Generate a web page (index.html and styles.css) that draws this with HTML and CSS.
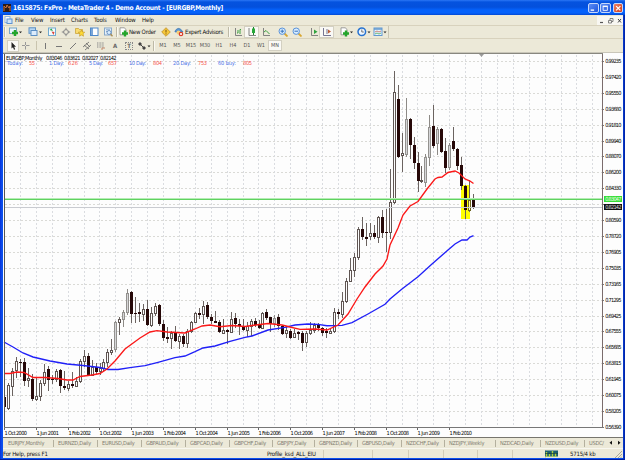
FILE: index.html
```html
<!DOCTYPE html>
<html lang="en">
<head>
<meta charset="utf-8">
<title>MetaTrader 4</title>
<link rel="stylesheet" href="styles.css">
</head>
<body>
<div class="window">
  <header class="titlebar">
    <svg class="appicon" viewBox="0 0 8 8"><rect width="8" height="8" fill="#2b1a18"/><path d="M1 7V2l2 2 1-3 2 3 1-2v5" fill="none" stroke="#c8703c" stroke-width="1"/></svg>
    <span class="title">1615875: FxPro - MetaTrader 4 - Demo Account - [EURGBP,Monthly]</span>
    <span class="winbtn"><svg viewBox="0 0 10 10"><path d="M2 7.2h4" stroke="#fff" stroke-width="1.6"/></svg></span>
    <span class="winbtn"><svg viewBox="0 0 10 10"><path d="M2.5 3v4.5h5V3z" fill="none" stroke="#fff"/><path d="M2 2.6h6" stroke="#fff" stroke-width="1.4"/></svg></span>
    <span class="winbtn close"><svg viewBox="0 0 10 10"><path d="M2.5 2.5l5 5m0-5l-5 5" stroke="#fff" stroke-width="1.5"/></svg></span>
  </header>
  <nav class="menubar">
    <svg class="docicon" viewBox="0 0 9 9"><rect x="1" y=".5" width="5" height="6" fill="#fff" stroke="#8fb5e2"/><rect x="3" y="3" width="5" height="4.5" fill="#cfe4fb" stroke="#5d92d2"/></svg>
    <span>File</span><span>View</span><span>Insert</span><span>Charts</span><span>Tools</span><span>Window</span><span>Help</span>
    <svg class="mdi" viewBox="0 0 26 9"><path d="M0 0h26v9H0z" fill="#f8f7f2"/><path d="M3 6.5h3" stroke="#555" stroke-width="1.2"/><path d="M11.5 4.5h3v2.5h-3zM13 4V2.500h3V5.500h-1" fill="none" stroke="#666" stroke-width=".8"/><path d="M21 3l3 3.500m0-3.500l-3 3.500" stroke="#444"/></svg>
  </nav>
  <div class="toolbar main">
    <i class="grip"></i>
    <div class="cell"><svg viewBox="0 0 14 10"><rect x=".5" y="1" width="7" height="5.500" fill="#edf6ff" stroke="#77a5c8"/><path d="M6 3v6M3 6h6" stroke="#24a52b" stroke-width="2.500"/><path d="M10 4.500h3l-1.500 1.700z" fill="#222"/></svg></div>
    <div class="cell"><svg viewBox="0 0 14 10"><rect x="1" y=".8" width="6.500" height="5.500" fill="#b8d7f4" stroke="#5b8fc4"/><rect x="3" y="3.500" width="6" height="5" fill="#dcecfc" stroke="#5b8fc4"/><path d="M11 4.500h3l-1.500 1.700z" fill="#222"/></svg></div>
    <div class="cell"><svg viewBox="0 0 10 10"><rect x="1.500" y="1" width="7" height="7.500" fill="#f4fbff" stroke="#70a9cf"/><path d="M2.500 3l2-1.500L6 4z" fill="#27a547"/><path d="M4.500 4.500l3 .5-1 3z" fill="#dd4438"/></svg></div>
    <div class="cell"><svg viewBox="0 0 10 10"><circle cx="5" cy="5" r="2.400" fill="none" stroke="#888"/><path d="M5 .8v2.400m0 3.600v2.400M.8 5h2.400m3.600 0h2.400" stroke="#888"/></svg></div>
    <div class="cell"><svg viewBox="0 0 10 10"><path d="M.5 1.500h3l1 1h3v4h-7z" fill="#f9dc70" stroke="#c79d2d" stroke-width=".7"/><path d="M6.500 3l1 2 2.200.2-1.600 1.600.4 2.400-2-1.200-2 1.200.4-2.400-1.600-1.600 2.200-.2z" fill="#ffdb39" stroke="#bd9420" stroke-width=".6"/></svg></div>
    <div class="cell"><svg viewBox="0 0 10 10"><rect x="1.500" y="1" width="7.500" height="7.500" fill="#fff" stroke="#4e89cb"/><path d="M3 1v7.500" stroke="#4e89cb" stroke-width="1.500"/></svg></div>
    <div class="cell"><svg viewBox="0 0 10 10"><rect x="1.500" y="1" width="7" height="7" fill="#e7f0f8" stroke="#86a8cb"/><path d="M3 2.800h4M3 4.500h2" stroke="#86a8cb"/><circle cx="6" cy="5.500" r="2" fill="#d8edff" stroke="#7096c5"/><path d="M7.500 7l2 2.300" stroke="#aa8d54" stroke-width="1.300"/></svg></div>
    <i class="grip"></i>
    <div class="cell"><svg viewBox="0 0 10 10"><path d="M1 .8h4.500l1.500 2v5H1z" fill="#fff" stroke="#888" stroke-width=".8"/><path d="M6 3.500v6M3 6.500h6" stroke="#24a52b" stroke-width="2.400"/></svg></div>
    <span class="label order">New Order</span>
    <div class="cell"><svg viewBox="0 0 10 10"><path d="M5 .7L9.300 5 5 9.300.7 5z" fill="#f6c73a" stroke="#b9861b" stroke-width=".7"/><path d="M5 2.800v2.700M5 6.400v1" stroke="#7b5412"/></svg></div>
    <div class="cell"><svg viewBox="0 0 10 10"><path d="M1 4Q4-1 8 3.500L9 5H1z" fill="#5c98d2" stroke="#356ba8" stroke-width=".6"/><circle cx="4.500" cy="5.500" r="2" fill="#f5ce79"/><circle cx="7" cy="7" r="2.300" fill="#dc3d28"/><rect x="6" y="6.200" width="2" height="1.600" fill="#fff"/></svg></div>
    <span class="label advisors">Expert Advisors</span>
    <i class="grip"></i>
    <div class="cell"><svg viewBox="0 0 10 10"><path d="M2.500 1v7.500H9" fill="none" stroke="#777" stroke-width=".9"/><path d="M4 6h1V3M7 7V2.500h1" fill="none" stroke="#3c9f40"/></svg></div>
    <div class="cell on"><svg viewBox="0 0 10 10"><path d="M2 1v7.500h7" fill="none" stroke="#777" stroke-width=".9"/><path d="M6.500 0v8" stroke="#19832b"/><rect x="5" y="1.500" width="3" height="4.500" fill="#27a739"/></svg></div>
    <div class="cell"><svg viewBox="0 0 10 10"><path d="M2.500 1v7.500H9" fill="none" stroke="#777" stroke-width=".9"/><path d="M3 5l2-1.500L8.500 7" fill="none" stroke="#3c9f40"/></svg></div>
    <i></i>
    <div class="cell"><svg viewBox="0 0 10 10"><path d="M6.500 6.500l3 3" stroke="#d9a832" stroke-width="1.800"/><circle cx="4.200" cy="4.200" r="3.200" fill="#d9edff" stroke="#5992d9"/><path d="M2.500 4.200H6M4.200 2.500V6" stroke="#3571bd"/></svg></div>
    <div class="cell"><svg viewBox="0 0 10 10"><path d="M6.500 6.500l3 3" stroke="#d9a832" stroke-width="1.800"/><circle cx="4.200" cy="4.200" r="3.200" fill="#d9edff" stroke="#5992d9"/><path d="M2.500 4.200H6" stroke="#3571bd"/></svg></div>
    <i></i>
    <div class="cell"><svg viewBox="0 0 10 10"><path d="M2.500 1v7.500H9" fill="none" stroke="#777" stroke-width=".9"/><path d="M5 2.500l3.500 2.200L5 7z" fill="#2da23d"/></svg></div>
    <div class="cell on"><svg viewBox="0 0 10 10"><path d="M1.500 1v7.500H9M5 2v5" fill="none" stroke="#668" stroke-width=".9"/><path d="M6 2.500l3 2-3 2z" fill="#bc5b35"/></svg></div>
    <i></i>
    <div class="cell"><svg viewBox="0 0 14 10"><path d="M1 .8h4.500l1.500 2v5H1z" fill="#fff" stroke="#888" stroke-width=".8"/><path d="M6 3.500v6M3 6.500h6" stroke="#24a52b" stroke-width="2.400"/><path d="M10 4.500h3l-1.500 1.700z" fill="#222"/></svg></div>
    <div class="cell"><svg viewBox="0 0 14 10"><circle cx="4.800" cy="4.800" r="3.800" fill="#eff7ff" stroke="#2773d0" stroke-width="1.500"/><path d="M4.800 2.500v2.500h2" fill="none" stroke="#555" stroke-width=".8"/><path d="M10.500 4.500h3L12 6.200z" fill="#222"/></svg></div>
    <div class="cell"><svg viewBox="0 0 14 10"><rect x="1" y="1" width="8" height="7.500" fill="#e7f4ff" stroke="#6098cf"/><path d="M1 2h8" stroke="#6098cf" stroke-width="1.500"/><path d="M2 5l2-1 2 1 2-1" fill="none" stroke="#c06554" stroke-width=".8"/><path d="M2 7l2-1 2 1 2-1" fill="none" stroke="#45a454" stroke-width=".8"/><path d="M10.500 4.500h3L12 6.200z" fill="#222"/></svg></div>
    <i class="endline"></i>
  </div>
  <div class="toolbar tools">
    <i class="grip"></i>
    <div class="cell on"><svg viewBox="0 0 10 10"><path d="M3.500 1v6.500L5 6.200l1 2.600 1.200-.5-1.100-2.500H8z" fill="#222"/></svg></div>
    <div class="cell"><svg viewBox="0 0 10 10"><path d="M4.500 1v3m0 1v3.500M1 4.500h3m1 0h3.500" stroke="#999"/></svg></div>
    <i class="sep"></i>
    <div class="cell"><svg viewBox="0 0 10 10"><path d="M5.500 2v6" stroke="#777"/></svg></div>
    <div class="cell"><svg viewBox="0 0 10 10"><path d="M2 5.500h6" stroke="#777"/></svg></div>
    <div class="cell"><svg viewBox="0 0 10 10"><path d="M2 8l6-6" stroke="#777"/></svg></div>
    <div class="cell"><svg viewBox="0 0 10 10"><path d="M1 6l6-5M3 9l6-5M2 4l5 4M4 2l4 4" stroke="#666" stroke-width=".8"/></svg></div>
    <div class="cell"><svg viewBox="0 0 10 10"><path d="M1 2h7M1 4h7M1 6h7" stroke="#888" stroke-dasharray="1 .6"/><path d="M6 9V7h3" fill="none" stroke="#c48a6c"/></svg></div>
    <div class="cell"><b>A</b></div>
    <div class="cell"><b class="boxed">T</b></div>
    <div class="cell"><svg viewBox="0 0 14 10"><path d="M1 3l2-2 2 2-2 2zM5 7l2-2 2 2-2 2z" fill="#444"/><path d="M4 4l2 2" stroke="#444"/><path d="M10.500 4.500h3L12 6.200z" fill="#222"/></svg></div>
    <i class="grip"></i>
    <span class="tf">M1</span><span class="tf">M5</span><span class="tf">M15</span><span class="tf">M30</span><span class="tf">H1</span><span class="tf">H4</span><span class="tf">D1</span><span class="tf">W1</span><span class="tf on">MN</span>
  </div>
  <svg class="chart" id="chart" viewBox="3 52 620 385"></svg>
  <div class="tabs">
    <span>EURJPY,Monthly</span><span>EURNZD,Daily</span><span>EURUSD,Daily</span><span>GBPAUD,Daily</span><span>GBPCAD,Daily</span><span>GBPCHF,Daily</span><span>GBPJPY,Daily</span><span>GBPNZD,Daily</span><span>GBPUSD,Daily</span><span>NZDCHF,Daily</span><span>NZDJPY,Weekly</span><span>NZDCAD,Daily</span><span>NZDUSD,Daily</span><span>USDC/</span>
    <svg class="arrows" viewBox="0 0 16 10"><path d="M5 2.800v4L2.500 4.800zM11 2.800v4l2.500-2z" fill="#111"/></svg>
  </div>
  <footer class="status">
    <span>For Help, press F1</span><span>Profile_ksd_ALL_EIU</span><i></i><i></i><i></i><i></i><i></i><i></i><i></i>
    <svg class="bars" viewBox="0 0 13 8"><path d="M0 .5h13v6H0z" fill="#1b5f70"/><path d="M1.500 7V2m3 5V4m3 3V1m3 6V3" stroke="#b4d03e" stroke-width="1.400"/><path d="M0 3.500h13" stroke="#183d38" stroke-width=".7"/></svg>
    <span class="traffic">5715/4 kb</span>
    <svg class="resize" viewBox="0 0 8 8"><path d="M1 8l7-7M4 8l4-4M6.500 8L8 6.500" stroke="#aaa797"/></svg>
  </footer>
</div>
<script src="chart.js"></script>
</body>
</html>
```

FILE: styles.css
```css
* { box-sizing: border-box; }
body {
  margin: 0;
  font: 6px/1 "DejaVu Sans Condensed", "DejaVu Sans", sans-serif;
  color: #111;
}
.window {
  width: 625px;
  height: 460px;
  padding: 0 2px 2px 3px;
  background: linear-gradient(90deg, #0831d9 0, #0b50ee 2px, #0b50ee 3px, #0b50ee 622px, #001ea0 625px);
  border-bottom: 1px solid #001ea0;
  overflow: hidden;
  white-space: nowrap;
}
.window > * { width: 620px; }
svg { display: block; }

.titlebar {
  display: flex;
  align-items: center;
  height: 15px;
  gap: 1px;
  padding: 1px 2px 0 3px;
  margin-left: -3px;
  background: linear-gradient(#2b76f5 0, #0553df 2px, #0450dc 7px, #0562fb 10px, #0562fb 13px, #0348d2 15px);
}
.window > .titlebar { width: 625px; }
.appicon { width: 8px; height: 8px; }
.title {
  flex: 1;
  margin-left: 1px;
  color: #fff;
  font: bold 6.600px/10px "DejaVu Sans Condensed", sans-serif;
  letter-spacing: -0.25px;
}
.winbtn {
  width: 10.500px;
  height: 10.500px;
  margin-left: .7px;
  border: 1px solid #c6d8fb;
  border-radius: 2px;
  background: linear-gradient(135deg, #5b8df5, #1e55dd);
}
.winbtn.close { background: linear-gradient(135deg, #ee8366, #d33c17); }

.menubar {
  display: grid;
  grid-template-columns: 12px 16px 19px 21px 23px 21px 27px 20px 1fr;
  align-items: center;
  height: 11px;
  background: #ece9d8;
  border-bottom: 1px solid #d8d2bd;
  letter-spacing: -.1px;
}
.docicon { width: 9px; height: 9px; margin-left: 1px; }
.mdi { width: 26px; height: 9px; justify-self: end; }

.toolbar {
  display: grid;
  align-items: center;
  background: #ece9d8;
}
.main {
  height: 13px;
  grid-template-columns: 4px 17px 21px 14px 14px 14px 14px 14px 4px 10px 30px 14px 12px 42px 4px 13px 15px 14px 3px 14px 14px 4px 11px 15px 4px 17px 17px 16px 2px;
  border-bottom: 1px solid #d8d2bd;
}
.tools {
  height: 13px;
  grid-template-columns: 4px 12px 14px 5px 14px 14px 14px 14px 14px 14px 14px 16px 4px repeat(9, 14px);
}
.tools .grip:first-child { visibility: hidden; }
.cell {
  display: flex;
  align-items: center;
  justify-content: center;
  height: 12px;
}
.cell svg { height: 10px; width: 10px; }
.cell svg[viewBox="0 0 14 10"] { width: 14px; }
.cell b { color: #666; font-size: 6px; }
.cell .boxed { border: 1px dotted #888; padding: 0 1px; }
.on { background: #faf9f5; border: 1px solid #d3d0c2; }
.grip { width: 1px; height: 10px; margin-left: 1px; background: #bdb9a6; box-shadow: 1px 0 #faf9f2; }
.sep { width: 1px; height: 9px; margin-left: 3px; background: #c9c4ae; }
.endline { width: 1px; height: 12px; background: #cac6b4; }
.label { font-size: 6px; letter-spacing: -.22px; }
.advisors { letter-spacing: -.28px; }
.tf {
  height: 11px;
  line-height: 11px;
  text-align: center;
  color: #555;
  font-size: 5.500px;
}
.tf.on { line-height: 9px; }

.chart { height: 385px; }
.chart text { font: 5.600px "DejaVu Sans Condensed", sans-serif; fill: #000; }

.tabs {
  display: grid;
  grid-template-columns: 50px 44px 44px 44px 44px 43px 42px 43px 44px 43px 51px 45px 44px 22px 16px;
  align-items: center;
  height: 11px;
  padding-left: 1px;
  background: #ece9d8;
  border-top: 1px solid #77756d;
  color: #7f7c70;
  font-size: 5.600px;
  overflow: hidden;
}
.tabs span {
  height: 7px;
  line-height: 7px;
  padding-left: 4px;
  border-right: 1px solid #b4b09e;
  letter-spacing: -.24px;
}
.tabs span:nth-last-of-type(1) { border: 0; }
.arrows { width: 16px; height: 10px; }

.status {
  display: grid;
  grid-template-columns: 264px 56px 49px 36px 35px 34px 35px 33px 0 13px 56px 9px;
  align-items: center;
  height: 10px;
  background: #ece9d8;
  border-top: 1px solid #f8f7ef;
}
.status > span:first-child { letter-spacing: -.22px; }
.status i { height: 8px; border-left: 1px solid #d2ccb8; }
.status span:nth-of-type(2) { letter-spacing: -.22px; }
.bars { width: 13px; height: 8px; }
.traffic { padding-left: 12px; letter-spacing: -.2px; }
.resize { width: 8px; height: 8px; }
```

FILE: chart.js
```js
const chart = document.getElementById('chart');
const NS = 'http://www.w3.org/2000/svg';

function add(tag, attrs, text) {
  const el = document.createElementNS(NS, tag);
  for (const key in attrs) el.setAttribute(key, attrs[key]);
  if (text) el.textContent = text;
  chart.appendChild(el);
}
function rect(x, y, width, height, fill) {
  add('rect', { x, y, width, height, fill });
}

rect(3, 52, 620, 385, '#fdfdfd');
rect(3, 52, 620, 1, '#c9c6b9');
rect(3, 53, 600, 1, '#88877f');

// Grid
for (let k = 0; k < 24; k++) {
  const y = Math.round(61 + k * 15.91) + 0.5;
  add('path', { d: `M5 ${y}H602`, stroke: '#dadad6', 'stroke-dasharray': '2 2', fill: 'none' });
}
for (let k = 1; k < 38; k++) {
  const x = Math.floor(4.5 + k * 15.9) + 0.5;
  if (x < 602) add('path', { d: `M${x} 55V427`, stroke: '#dadce0', 'stroke-dasharray': '2 2', fill: 'none' });
}

rect(461, 185, 9, 34, '#ffff00');

// Each candle: high, body top, body bottom, low, kind (0 hollow, 1 filled, 2 shaded, 3 highlighted)
const candles = [
[393,397,407,419,1],[383,385,408,410,0],[368,371,386,396,0],[357,361,370,378,0],[359,362,363,377,1],[358,362,381,386,1],
[368,378,380,387,0],[374,379,399,401,1],[377,396,399,401,0],[380,383,396,401,0],[364,372,383,386,0],[366,369,380,391,1],
[375,379,380,384,1],[369,371,379,382,0],[369,370,386,393,1],[371,386,388,390,1],[381,384,388,391,0],[372,384,386,388,1],
[377,381,386,387,0],[359,361,381,383,0],[350,356,361,367,0],[353,356,375,376,1],[360,367,375,376,0],[363,367,372,374,1],
[363,368,371,375,0],[359,362,368,371,0],[349,352,362,367,0],[339,350,352,355,0],[321,322,349,352,2],[317,319,322,335,0],
[310,312,319,327,2],[289,293,312,315,2],[291,292,314,323,1],[297,313,314,323,1],[303,312,314,322,1],[304,309,314,321,0],
[300,309,325,326,1],[307,313,325,327,0],[303,306,313,316,0],[304,305,324,326,1],[320,324,338,341,1],[327,337,339,343,1],
[331,333,338,349,0],[326,333,341,342,1],[334,336,341,349,0],[334,336,344,347,1],[329,331,343,348,0],[321,322,331,333,0],
[312,313,322,323,0],[308,313,315,319,1],[301,306,314,324,0],[302,305,317,319,1],[314,317,321,324,1],[311,321,323,323,1],
[320,322,332,333,1],[319,330,333,333,0],[329,330,332,344,1],[312,319,332,333,0],[313,318,324,328,1],[319,324,326,335,1],
[319,326,330,331,1],[322,326,330,337,0],[319,321,326,336,0],[318,321,325,327,1],[320,325,328,329,1],[312,313,328,329,0],
[309,312,318,320,1],[317,317,324,332,1],[315,318,323,327,2],[314,317,326,330,1],[325,326,334,335,1],[326,330,333,338,0],
[329,331,338,339,1],[329,333,337,338,0],[331,332,334,340,1],[331,333,343,351,1],[331,333,342,347,0],[322,330,333,335,0],
[323,325,330,333,0],[323,325,328,331,1],[327,328,333,336,1],[328,331,333,338,1],[329,331,333,334,0],[308,312,331,333,0],
[309,312,314,319,1],[292,301,314,318,0],[278,281,301,303,0],[258,270,281,282,0],[253,257,270,277,0],[227,229,257,260,0],
[217,229,237,240,1],[223,237,239,246,1],[223,233,236,240,0],[225,233,237,239,1],[216,217,237,243,0],[210,217,233,238,1],
[209,232,233,252,1],[169,202,232,239,0],[71,92,202,204,0],[85,99,157,158,1],[133,153,155,172,0],[98,119,154,157,2],
[118,119,145,159,1],[137,145,163,169,1],[152,163,181,192,1],[166,180,181,183,0],[154,157,182,187,2],[115,127,157,166,2],
[105,126,146,148,1],[127,129,143,155,2],[128,129,152,153,1],[138,151,168,173,1],[143,145,167,170,2],[127,141,149,151,1],
[148,149,166,170,1],[157,165,186,190,1],[185,186,210,219,1],[180,200,210,212,3],[194,199,208,209,1]
];
const outline = ['#5f5552', '#260808', '#93918e', '#6b6320'];
const inner = ['#fdfdfd', '#260808', '#d6d6d8', '#ffffb0'];
candles.forEach(([high, top, bottom, low, kind], i) => {
  const x = Math.floor(4.6 + i * 3.975);
  const left = Math.max(4, x - 1);
  const height = Math.max(1, bottom - top);
  rect(x, high, 1, low - high, kind === 2 ? '#8d8a86' : '#6b6360');
  rect(left, top, x + 2 - left, kind === 1 ? height : height + 1, outline[kind]);
  if (kind !== 1 && height > 1) rect(x, top + 1, 1, height - 1, inner[kind]);
});

// Price levels
rect(5, 199, 598, 1, '#5fd35f');
rect(5, 198, 598, 1, '#b5ebb5');
rect(5, 207, 598, 1, '#c9cbd0');

// Moving averages
const red = '4,373.5 10,373.500 17,372 24,372.5 33,377.5 45,377.5 58,378.500 67,380 73,380 80,376.5 92,375 100,373.5 107,369 115,361 125,349 140,338 150,332 157,330.7 167,332 185,333 195,329 202,326 210,325 220,326.7 232,325.5 245,326.5 252,325.5 268,323.5 282,325 290,327 300,329.3 315,329 327,330 338,325 348,314 357,299 365,287 375,274 383,266 387,259 390,245 398,228 403,215 410,206 418,201.5 427,189 435,179 438,177.5 442,177 448,172.5 455,171 459,173 465,179 470,181 473.5,183.5';
const blue = '4,342 13,347 23,353 33,357 50,361 67,364 83,365.5 100,367.5 108,369.5 118,369.5 130,367.7 145,365.7 158,362.3 175,357.7 185,356 195,351.7 203,348 215,346 230,341.3 245,337.3 252,336 268,330 285,327.3 295,325 308,324 318,324.3 327,325.7 342,325.3 352,322.7 368,314 385,304.3 390,299 402,289 418,276.7 432,264 448,250 455,244 462,240 467,240 470,237 473.5,235.7';
add('polyline', { points: blue, fill: 'none', stroke: '#2020f8', 'stroke-width': 1.35 });
add('polyline', { points: red, fill: 'none', stroke: '#fb1818', 'stroke-width': 1.35 });

// Axes
rect(4, 54, 1, 374, '#555');
rect(602, 54, 1, 374, '#7a6c6c');
rect(4, 427, 599, 1, '#777');
add('path', { d: 'M479 54h5l-2.5 3z', fill: '#999' });

// The gridline nearest the price tags carries no label
const prices = ['0.99235','0.97420','0.95550','0.93680','0.91810','0.89940','0.88070','0.86200','0.84330','','0.80590','0.78720','0.76905','0.75035','0.73165','0.71295','0.69425','0.67555','0.65685','0.63815','0.61945','0.60075','0.58205','0.56390'];
prices.forEach((price, k) => {
  const y = Math.round(61 + k * 15.91);
  rect(603, y, 1, 1, '#777');
  if (price) add('text', { x: 605.3, y: y + 2.4, textLength: 16.2 }, price);
});
function priceTag(y, fill, color, value) {
  rect(604, y, 18, 6, fill);
  add('text', { x: 605.3, y: y + 5, textLength: 16.2, style: `fill:${color}` }, value);
}
priceTag(196, '#35dd35', '#e8ffe8', '0.83047');
priceTag(204, '#111', '#ddd', '0.82142');

const dates = ['1 Oct 2000','1 Jun 2001','1 Feb 2002','1 Oct 2002','1 Jun 2003','1 Feb 2004','1 Oct 2004','1 Jun 2005','1 Feb 2006','1 Oct 2006','1 Jun 2007','1 Feb 2008','1 Oct 2008','1 Jun 2009','1 Feb 2010'];
dates.forEach((date, k) => {
  const x = Math.floor(4.5 + k * 31.8);
  rect(x, 428, 1, 2, '#666');
  add('text', { x: x + 0.5, y: 434.9, textLength: 22.5 }, date);
});

add('text', { x: 6, y: 59.8, textLength: 36.5 }, 'EURGBP,Monthly');
['0.83046', '0.83621', '0.82027', '0.82142'].forEach((v, k) =>
  add('text', { x: 46 + k * 18, y: 59.8, textLength: 16.5 }, v));
[[7,16,'Today:'],[49,15,'1 Day:'],[89,14,'5 Day:'],[129,17,'10 Day:'],[173,18,'20 Day:'],[218,18,'60 buy:']]
  .forEach(([x, w, t]) => add('text', { x, y: 65.3, textLength: w, style: 'fill:#4a72e8' }, t));
[[29,6,'55'],[68,10,'626'],[108,9,'657'],[153,9,'804'],[198,9,'753'],[243,9,'805']]
  .forEach(([x, w, t]) => add('text', { x, y: 65.3, textLength: w, style: 'fill:#f7554a' }, t));
```
